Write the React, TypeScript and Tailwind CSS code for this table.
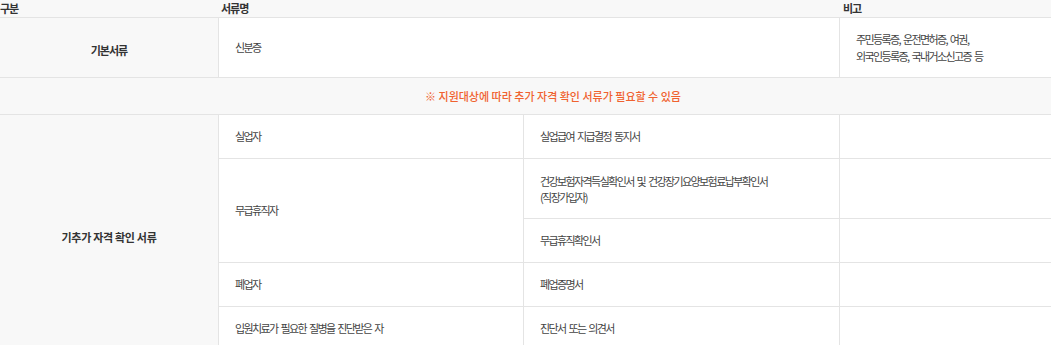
import React from "react";

const font = { fontFamily: '"Noto Sans CJK KR", "Noto Sans", sans-serif' };

const Cell: React.FC<{ className?: string; children?: React.ReactNode }> = ({ className = "", children }) => (
  <div className={`flex items-center bg-white pl-[16px] text-[11px] leading-[17px] tracking-[-1.6px] [word-spacing:2px] text-[#444] ${className}`}>
    {children}
  </div>
);

const Label: React.FC<{ className?: string; children: React.ReactNode }> = ({ className = "", children }) => (
  <div className={`flex items-center justify-center bg-[#f8f8f8] text-[11px] font-bold text-[#333] ${className}`}>
    {children}
  </div>
);

export default function App() {
  return (
    <div className="w-full overflow-hidden bg-white" style={font}>
      <div className="grid w-[1106px] grid-cols-[218px_304px_315px_1fr] grid-rows-[17px_59px_36px_43px_59px_43px_43px_43px] gap-px bg-[#e4e4e4]">
        {/* header */}
        <div className="col-span-4 grid grid-cols-[218px_304px_315px_1fr] gap-px bg-[#f8f8f8] text-[11px] font-bold leading-[17px] tracking-[-1px] text-[#333]">
          <div>구분</div>
          <div className="pl-[2px]">서류명</div>
          <div />
          <div className="pl-[3px]">비고</div>
        </div>

        {/* 기본서류 */}
        <Label className="pt-[5px] tracking-[-1px]">기본서류</Label>
        <Cell className="col-span-2">신분증</Cell>
        <Cell>
          <div>
            주민등록증, 운전면허증, 여권,
            <br />
            외국인등록증, 국내거소신고증 등
          </div>
        </Cell>

        {/* notice */}
        <div className="col-span-4 flex items-center justify-center bg-[#f8f8f8] text-[11px] font-medium text-[#f0622f]">
          ※ 지원대상에 따라 추가 자격 확인 서류가 필요할 수 있음
        </div>

        {/* 추가 자격 확인 */}
        <Label className="row-span-5 pt-[9px] tracking-[-0.3px]">기추가 자격 확인 서류</Label>

        <Cell>실업자</Cell>
        <Cell>실업급여 지급결정 동지서</Cell>
        <Cell />

        <Cell className="row-span-2">무급휴직자</Cell>
        <Cell>
          <div className="leading-[16px]">
            건강보험자격득실확인서 및 건강장기요양보험료납부확인서
            <br />
            (직장가입자)
          </div>
        </Cell>
        <Cell />
        <Cell>무급휴직확인서</Cell>
        <Cell />

        <Cell>폐업자</Cell>
        <Cell>폐업증명서</Cell>
        <Cell />

        <Cell>입원치료가 필요한 질병을 진단받은 자</Cell>
        <Cell>진단서 또는 의견서</Cell>
        <Cell />
      </div>
    </div>
  );
}
